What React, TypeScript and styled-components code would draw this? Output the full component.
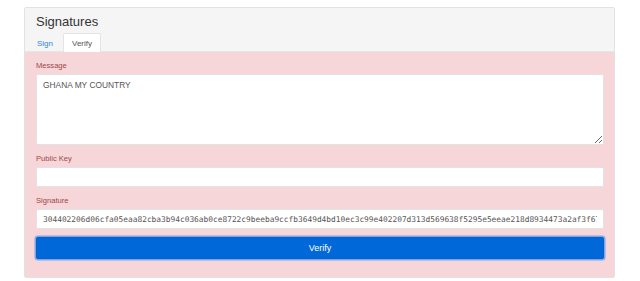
import styled, { createGlobalStyle } from "styled-components";

const GlobalStyle = createGlobalStyle`
	html, body {
		margin: 0;
		padding: 0;
		background: #fff;
	}
	body {
		font-family: "Liberation Sans", Arial, sans-serif;
		color: #333;
	}
`;

const Panel = styled.div`
	margin: 7px 0 0 24px;
	width: 591px;
	box-sizing: border-box;
	border: 1px solid #e2e2e2;
	border-radius: 2px;
	overflow: hidden;
`;

const PanelHeading = styled.div`
	background: #f5f5f5;
	padding-top: 6px;
`;

const Title = styled.h3`
	margin: 0 0 4px 11px;
	font-size: 13px;
	line-height: 15px;
	font-weight: 400;
	color: #333;
`;

const TabList = styled.div`
	display: flex;
	gap: 1px;
	padding-left: 3px;
`;

const Tab = styled.div<{ $active?: boolean }>`
	height: 19px;
	box-sizing: border-box;
	padding: 0 8px;
	display: flex;
	align-items: center;
	font-size: 8px;
	border: 1px solid ${(p) => (p.$active ? "#e4e4e4" : "transparent")};
	border-bottom: none;
	border-radius: 2px 2px 0 0;
	background: ${(p) => (p.$active ? "#fff" : "transparent")};
	color: ${(p) => (p.$active ? "#555" : "#2f86e0")};
	margin-bottom: -1px;
	position: relative;
`;

const PanelBody = styled.div`
	background: #f6d6d8;
	border-top: 1px solid #e4e6ea;
	padding: 8px 10px 18px 11px;
`;

const FormGroup = styled.div`
	margin-bottom: 8px;
`;

const Label = styled.label`
	display: block;
	font-size: 7.6px;
	line-height: 11px;
	color: #a0474a;
	margin-bottom: 3px;
`;

const TextArea = styled.textarea`
	display: block;
	width: 100%;
	height: 71px;
	box-sizing: border-box;
	border: 1px solid #e3e3e3;
	border-radius: 2px;
	padding: 4px 6px;
	font-family: "Liberation Sans", Arial, sans-serif;
	font-size: 8.4px;
	line-height: 12px;
	color: #555;
	background: #fff;
	outline: none;
`;

const Input = styled.input<{ $mono?: boolean }>`
	display: block;
	width: 100%;
	height: 20px;
	box-sizing: border-box;
	border: 1px solid #e3e3e3;
	border-radius: 2px;
	padding: 0 6px;
	font-family: ${(p) => (p.$mono ? '"DejaVu Sans Mono", monospace' : '"Liberation Sans", Arial, sans-serif')};
	font-size: ${(p) => (p.$mono ? "7.85px" : "8px")};
	color: #555;
	background: #fff;
	outline: none;
`;

const VerifyButton = styled.button`
	display: block;
	width: 100%;
	height: 22px;
	margin-top: 7px;
	box-sizing: border-box;
	background: #0068d8;
	border: 1px solid #0062cc;
	border-radius: 2px;
	box-shadow: 0 0 0 1.5px rgba(90, 150, 235, 0.75);
	color: #fff;
	font-family: "Liberation Sans", Arial, sans-serif;
	font-size: 9px;
	cursor: pointer;
`;

const SIGNATURE =
	"304402206d06cfa05eaa82cba3b94c036ab0ce8722c9beeba9ccfb3649d4bd10ec3c99e402207d313d569638f5295e5eeae218d8934473a2af3f6772a0c1e5";

export default function App() {
	return (
		<>
			<GlobalStyle />
			<Panel>
				<PanelHeading>
					<Title>Signatures</Title>
					<TabList>
						<Tab>Sign</Tab>
						<Tab $active>Verify</Tab>
					</TabList>
				</PanelHeading>
				<PanelBody>
					<FormGroup>
						<Label>Message</Label>
						<TextArea defaultValue="GHANA MY COUNTRY" />
					</FormGroup>
					<FormGroup>
						<Label>Public Key</Label>
						<Input defaultValue="" />
					</FormGroup>
					<FormGroup>
						<Label>Signature</Label>
						<Input $mono defaultValue={SIGNATURE} />
					</FormGroup>
					<VerifyButton>Verify</VerifyButton>
				</PanelBody>
			</Panel>
		</>
	);
}
